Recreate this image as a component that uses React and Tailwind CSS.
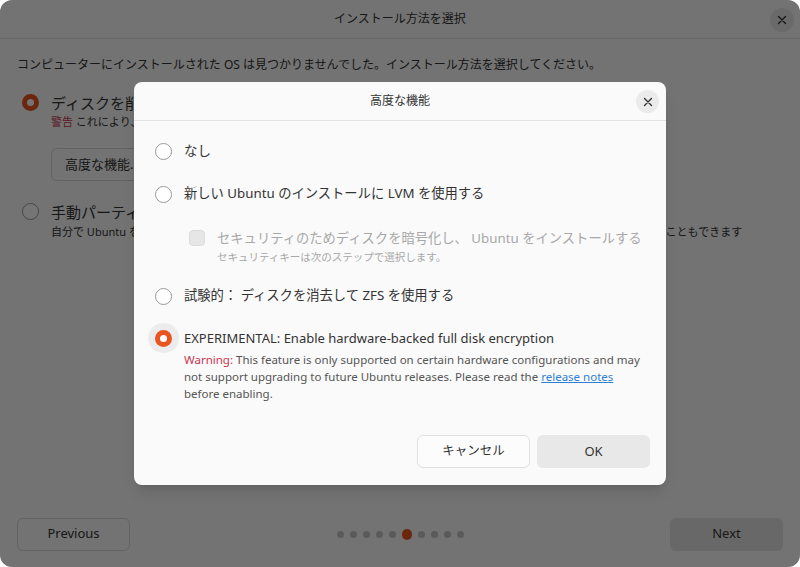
import React from 'react';

const font = "font-['Noto_Sans','Noto_Sans_CJK_JP',sans-serif]";

function Radio({ checked }) {
  if (checked) {
    return (
      <span className="w-[17px] h-[17px] rounded-full bg-[#e95420] flex items-center justify-center shrink-0">
        <span className="w-[7px] h-[7px] rounded-full bg-white" />
      </span>
    );
  }
  return <span className="block w-[17px] h-[17px] rounded-full border-[1.5px] border-[#9a9a9a] bg-white shrink-0" />;
}

function CloseIcon() {
  return (
    <svg width="10" height="10" viewBox="0 0 10 10" fill="none" stroke="#333" strokeWidth="1.4" strokeLinecap="round">
      <path d="M1.5 1.5l7 7M8.5 1.5l-7 7" />
    </svg>
  );
}

export default function App() {
  const dots = [0, 1, 2, 3, 4, 5, 6, 7, 8, 9];
  return (
    <div className={`w-[800px] h-[567px] bg-white relative overflow-hidden ${font}`}>
      {/* Installer window (behind modal) */}
      <div className="w-full h-full rounded-xl bg-[#fafafa] flex flex-col text-[#333]">
        <div className="h-[39px] border-b border-[#dcdcdc] flex items-center justify-center relative shrink-0">
          <span className="text-[12px]">インストール方法を選択</span>
          <div className="absolute right-[6px] top-[8px] w-[24px] h-[24px] rounded-full bg-[#e6e6e6] flex items-center justify-center">
            <CloseIcon />
          </div>
        </div>

        <div className="px-[17px] pt-[16px] flex-1">
          <p className="text-[12px] leading-[20px]">コンピューターにインストールされた OS は見つかりませんでした。インストール方法を選択してください。</p>

          <div className="mt-[17px] flex items-start gap-[12px] pl-[5px]">
            <span className="block mt-[2px] shrink-0"><Radio checked /></span>
            <div>
              <div className="text-[15px] leading-[22px]">ディスクを削除して Ubuntu をインストールする</div>
              <div className="text-[11px] leading-[16px]"><span className="text-[#c7364f]">警告</span> これにより、ディスク上のすべてのデータが削除されます。</div>
              <button className="mt-[18px] h-[33px] px-[13px] rounded-md border border-[#d6d6d6] text-[13px]">高度な機能...</button>
            </div>
          </div>

          <div className="mt-[20px] flex items-start gap-[12px] pl-[5px]">
            <span className="block mt-[2px] shrink-0"><Radio /></span>
            <div className="flex-1">
              <div className="text-[15px] leading-[22px]">手動パーティショニング</div>
              <div className="text-[11px] leading-[16px] whitespace-nowrap mt-[1px]">自分で Ubuntu をインストールするパーティションを作成したりサイズ変更したり、複数のパーティションを選択したりすることもできます</div>
            </div>
          </div>
        </div>

        <div className="h-[68px] px-[17px] pt-[2px] flex items-center justify-between shrink-0">
          <button className="w-[113px] h-[33px] rounded-md border border-[#d6d6d6] text-[13px]">Previous</button>
          <div className="flex items-center gap-[6px]">
            {dots.map((d) => (
              d === 5
                ? <span key={d} className="w-[10px] h-[11px] rounded-full bg-[#e95420]" />
                : <span key={d} className="w-[7px] h-[7px] rounded-full bg-[#c4c4c4]" />
            ))}
          </div>
          <button className="w-[113px] h-[33px] rounded-md bg-[#e3e3e3] text-[13px]">Next</button>
        </div>
      </div>

      {/* Dim overlay */}
      <div className="absolute inset-0 rounded-xl bg-black/[0.54]" />

      {/* Modal dialog */}
      <div className="absolute left-[134px] top-[82px] w-[532px] h-[403px] rounded-lg bg-[#fafafa] flex flex-col text-[#333] shadow-lg">
        <div className="h-[39px] border-b border-[#e2e2e2] flex items-center justify-center relative shrink-0">
          <span className="text-[12px]">高度な機能</span>
          <div className="absolute right-[7px] top-[8px] w-[23px] h-[23px] rounded-full bg-[#ebebeb] flex items-center justify-center">
            <CloseIcon />
          </div>
        </div>

        <div className="pl-[21px] pr-[20px] pt-[19px] flex-1">
          <div className="flex items-center gap-[12px] h-[22px]">
            <Radio />
            <span className="text-[13.5px]">なし</span>
          </div>
          <div className="mt-[21px] flex items-center gap-[12px] h-[22px]">
            <Radio />
            <span className="text-[13.3px]">新しい Ubuntu のインストールに LVM を使用する</span>
          </div>

          <div className="mt-[22px] pl-[34px] flex items-start gap-[12px]">
            <span className="mt-[3px] w-[16px] h-[16px] rounded-[4px] bg-[#e6e6e6] border border-[#dcdcdc] shrink-0" />
            <div>
              <div className="text-[13.3px] leading-[22px] text-[#a8a8a8] whitespace-nowrap">セキュリティのためディスクを暗号化し、 Ubuntu をインストールする</div>
              <div className="text-[10.5px] leading-[16px] text-[#a8a8a8]">セキュリティキーは次のステップで選択します。</div>
            </div>
          </div>

          <div className="mt-[20px] flex items-center gap-[12px] h-[22px]">
            <Radio />
            <span className="text-[13.3px]">試験的： ディスクを消去して ZFS を使用する</span>
          </div>

          <div className="mt-[20px] flex items-start gap-[12px]">
            <span className="relative w-[17px] h-[22px] flex items-center justify-center shrink-0">
              <span className="absolute -inset-x-[7px] -inset-y-[4px] rounded-full bg-[#ececec]" />
              <span className="relative"><Radio checked /></span>
            </span>
            <div>
              <div className="text-[13px] leading-[22px]">EXPERIMENTAL: Enable hardware-backed full disk encryption</div>
              <p className="text-[11.5px] leading-[17px] text-[#555] mt-[2px]">
                <span className="text-[#c7364f]">Warning:</span> This feature is only supported on certain hardware configurations and may not support upgrading to future Ubuntu releases. Please read the <a className="text-[#2f7fd8] underline">release notes</a> before enabling.
              </p>
            </div>
          </div>
        </div>

        <div className="flex justify-end gap-[7px] pr-[16px] pb-[17px]">
          <button className="w-[113px] h-[33px] rounded-md border border-[#e0e0e0] bg-[#fcfcfc] text-[12.5px]">キャンセル</button>
          <button className="w-[113px] h-[33px] rounded-md bg-[#e8e8e8] text-[13px]">OK</button>
        </div>
      </div>
    </div>
  );
}
